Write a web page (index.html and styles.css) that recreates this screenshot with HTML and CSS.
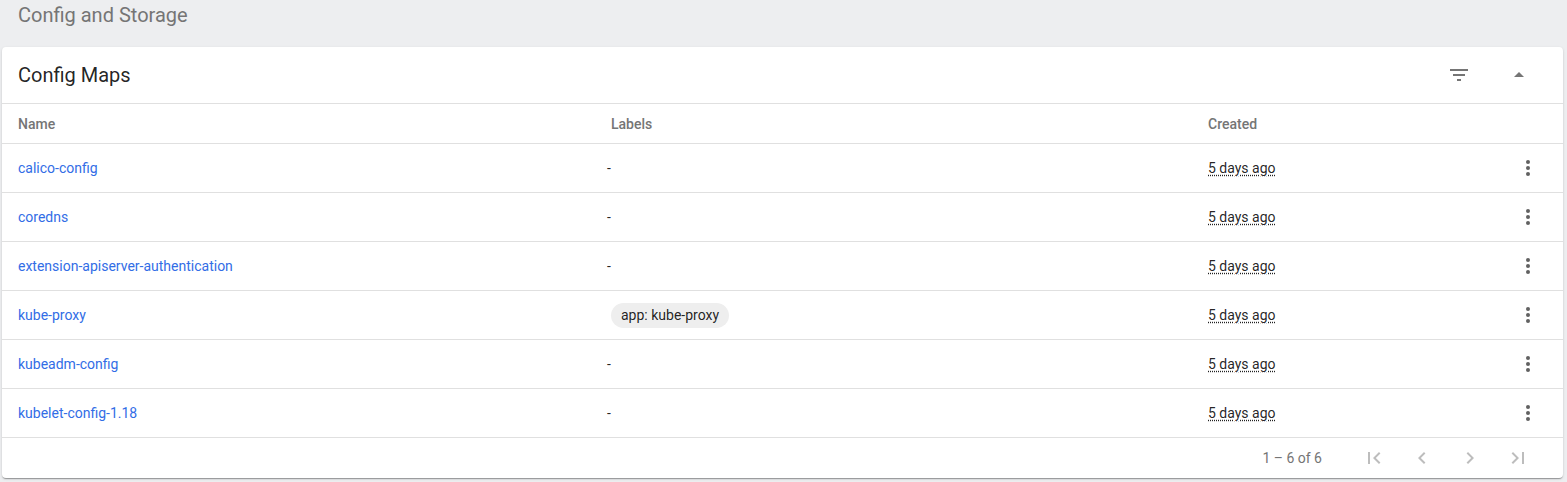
FILE: index.html
```html
<!DOCTYPE html>
<html>
<head>
<meta charset="utf-8">
<link rel="stylesheet" href="styles.css">
</head>
<body>
<div class="page-title">Config and Storage</div>
<div class="card">
  <div class="card-header">
    <div class="card-title">Config Maps</div>
    <div class="header-actions">
      <button class="icon-btn" aria-label="filter">
        <svg width="24" height="24" viewBox="0 0 24 24"><path d="M10 18h4v-2h-4v2zM3 6v2h18V6H3zm3 7h12v-2H6v2z" fill="#757575"/></svg>
      </button>
      <button class="icon-btn" aria-label="collapse">
        <svg width="24" height="24" viewBox="0 0 24 24"><path d="M7 14l5-5 5 5z" fill="#757575"/></svg>
      </button>
    </div>
  </div>
  <div class="table">
    <div class="row head">
      <div class="cell name">Name</div>
      <div class="cell labels">Labels</div>
      <div class="cell created">Created</div>
      <div class="cell actions"></div>
    </div>
    <div class="row">
      <div class="cell name"><a href="#">calico-config</a></div>
      <div class="cell labels"><span class="dash">-</span></div>
      <div class="cell created"><span class="age">5 days ago</span></div>
      <div class="cell actions"><span class="kebab"><i></i><i></i><i></i></span></div>
    </div>
    <div class="row">
      <div class="cell name"><a href="#">coredns</a></div>
      <div class="cell labels"><span class="dash">-</span></div>
      <div class="cell created"><span class="age">5 days ago</span></div>
      <div class="cell actions"><span class="kebab"><i></i><i></i><i></i></span></div>
    </div>
    <div class="row">
      <div class="cell name"><a href="#">extension-apiserver-authentication</a></div>
      <div class="cell labels"><span class="dash">-</span></div>
      <div class="cell created"><span class="age">5 days ago</span></div>
      <div class="cell actions"><span class="kebab"><i></i><i></i><i></i></span></div>
    </div>
    <div class="row">
      <div class="cell name"><a href="#">kube-proxy</a></div>
      <div class="cell labels"><span class="chip">app: kube-proxy</span></div>
      <div class="cell created"><span class="age">5 days ago</span></div>
      <div class="cell actions"><span class="kebab"><i></i><i></i><i></i></span></div>
    </div>
    <div class="row">
      <div class="cell name"><a href="#">kubeadm-config</a></div>
      <div class="cell labels"><span class="dash">-</span></div>
      <div class="cell created"><span class="age">5 days ago</span></div>
      <div class="cell actions"><span class="kebab"><i></i><i></i><i></i></span></div>
    </div>
    <div class="row">
      <div class="cell name"><a href="#">kubelet-config-1.18</a></div>
      <div class="cell labels"><span class="dash">-</span></div>
      <div class="cell created"><span class="age">5 days ago</span></div>
      <div class="cell actions"><span class="kebab"><i></i><i></i><i></i></span></div>
    </div>
  </div>
  <div class="paginator">
    <span class="range">1 – 6 of 6</span>
    <button class="icon-btn pg" aria-label="first page">
      <svg width="24" height="24" viewBox="0 0 24 24"><path d="M18.41 16.59L13.82 12l4.59-4.59L17 6l-6 6 6 6zM6 6h2v12H6z" fill="#bdbdbd"/></svg>
    </button>
    <button class="icon-btn pg" aria-label="previous page">
      <svg width="24" height="24" viewBox="0 0 24 24"><path d="M15.41 7.41L14 6l-6 6 6 6 1.41-1.41L10.83 12z" fill="#bdbdbd"/></svg>
    </button>
    <button class="icon-btn pg" aria-label="next page">
      <svg width="24" height="24" viewBox="0 0 24 24"><path d="M10 6L8.59 7.41 13.17 12l-4.58 4.59L10 18l6-6z" fill="#bdbdbd"/></svg>
    </button>
    <button class="icon-btn pg" aria-label="last page">
      <svg width="24" height="24" viewBox="0 0 24 24"><path d="M5.59 7.41L10.18 12l-4.59 4.59L7 18l6-6-6-6zM16 6h2v12h-2z" fill="#bdbdbd"/></svg>
    </button>
  </div>
</div>
</body>
</html>
```
FILE: styles.css
```css
html, body {
  margin: 0;
  padding: 0;
}
body {
  background: #edeef0;
  font-family: Roboto, "Liberation Sans", sans-serif;
  color: rgba(0,0,0,0.87);
  width: 1567px;
  height: 482px;
  overflow: hidden;
}
.page-title {
  height: 30px;
  line-height: 30px;
  padding-left: 18px;
  font-size: 20px;
  color: #757575;
  margin-bottom: 17px;
}
.card {
  margin-left: 2px;
  width: 1561px;
  background: #fff;
  border-radius: 4px;
  box-shadow: 0 2px 1px -1px rgba(0,0,0,.2), 0 1px 1px 0 rgba(0,0,0,.14), 0 1px 3px 0 rgba(0,0,0,.12);
}
.card-header {
  display: flex;
  align-items: center;
  justify-content: space-between;
  height: 56px;
  padding-left: 16px;
  border-bottom: 1px solid #e0e0e0;
}
.card-title {
  font-size: 20px;
  color: rgba(0,0,0,0.87);
}
.header-actions {
  display: flex;
  gap: 20px;
  padding-right: 24px;
}
.icon-btn {
  width: 40px;
  height: 40px;
  border: 0;
  background: transparent;
  padding: 0;
  display: flex;
  align-items: center;
  justify-content: center;
}
.row {
  display: flex;
  align-items: center;
  height: 48px;
  border-bottom: 1px solid #e0e0e0;
  font-size: 14px;
}
.row.head {
  height: 39px;
  color: #757575;
  font-weight: 500;
  font-size: 14px;
}
.cell.name {
  width: 593px;
  padding-left: 16px;
}
.cell.labels {
  width: 597px;
}
.cell.created {
  width: 300px;
}
.cell.actions {
  flex: 1;
  display: flex;
  justify-content: flex-end;
  padding-right: 33px;
}
.dash {
  margin-left: -4px;
  color: rgba(0,0,0,0.87);
}
a {
  color: #326de6;
  text-decoration: none;
  font-size: 14px;
}
.chip {
  display: inline-block;
  background: #eeeeee;
  border-radius: 13px;
  height: 25px;
  line-height: 25px;
  padding: 0 10px;
  font-size: 14px;
  color: rgba(0,0,0,0.87);
}
.age {
  text-decoration: underline dotted;
  text-underline-offset: 2px;
}
.kebab {
  display: flex;
  flex-direction: column;
  gap: 2px;
  align-items: center;
}
.kebab i {
  display: block;
  width: 4px;
  height: 4px;
  border-radius: 50%;
  background: #616161;
}
.paginator {
  display: flex;
  align-items: center;
  justify-content: flex-end;
  height: 40px;
  padding-right: 25px;
}
.range {
  font-size: 14px;
  color: #757575;
  margin-right: 24px;
}
.pg {
  margin-left: 8px;
}
```
